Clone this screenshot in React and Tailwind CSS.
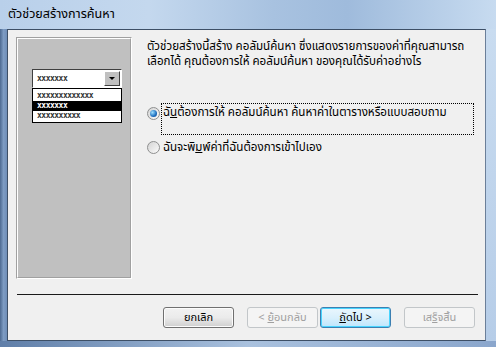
import React from "react";

const F = { fontFamily: 'Tahoma, "Noto Sans Thai", "Noto Sans", "DejaVu Sans", sans-serif' };

function Radio({ checked }) {
  return (
    <div className="w-[13px] h-[13px] rounded-full border border-[#8e8f8f] bg-gradient-to-br from-[#d4d4d4] to-[#fbfbfb] flex items-center justify-center shrink-0">
      {checked && (
        <div className="w-[7px] h-[7px] rounded-full bg-[radial-gradient(circle_at_35%_35%,#9fe0ff,#1d6fc0_60%,#0c3e8a)]" />
      )}
    </div>
  );
}

function Btn({ children, variant }) {
  const base =
    "w-[71px] h-[21px] rounded-[3px] flex items-center justify-center text-[11px] leading-none";
  if (variant === "disabled")
    return (
      <div className={base + " border border-[#c2c6c9] bg-[#f4f4f4] text-[#a0a0a0]"}><span>{children}</span></div>
    );
  if (variant === "default")
    return (
      <div className={base + " border border-[#3c7fb1] bg-gradient-to-b from-[#eaf6fd] via-[#d9f0fc] to-[#bee6fd] text-black shadow-[inset_0_0_0_1px_#48d4fe]"}>
        <span>{children}</span>
      </div>
    );
  return (
    <div className={base + " border border-[#707070] bg-gradient-to-b from-[#f2f2f2] via-[#ebebeb] to-[#cfcfcf] text-black shadow-[inset_0_0_0_1px_#fcfcfc]"}>
      <span>{children}</span>
    </div>
  );
}

export default function App() {
  return (
    <div style={F} className="w-[496px] h-[347px] relative overflow-hidden bg-[linear-gradient(90deg,#b9d0ea_0%,#c4d8ee_30%,#a8c2e0_55%,#9fbbdc_70%,#c7dbf0_100%)] flex flex-col">
      {/* title bar */}
      <div className="h-[29px] flex items-center pl-[8px] pt-[1px] text-[12.6px] text-black shrink-0">
        ตัวช่วยสร้างการค้นหา
      </div>
      <div className="flex flex-1 min-h-0">
        <div className="w-[7px] bg-gradient-to-r from-[#4d6a91] via-[#7e9cc3] to-[#6f8eb8] shrink-0" />
        {/* content */}
        <div className="w-[479px] h-[312px] border border-[#3d4f66] border-r-[#6b7f99] bg-[#f0f0f0] flex flex-col shrink-0">
          <div className="flex pt-[7px] pl-[8px]">
            {/* left picture panel */}
            <div className="w-[116px] h-[242px] border border-[#a0a0a0] border-r-white border-b-white shrink-0">
              <div className="w-full h-full border border-white border-r-[#a0a0a0] border-b-[#a0a0a0] bg-[#c0c0c0] pl-[14px] pt-[30px]">
                <div className="w-[90px]">
                  <div className="h-[19px] border border-[#404040] border-r-white border-b-white bg-white flex">
                    <div className="flex-1 flex items-center pl-[4px] text-[8px] font-bold tracking-[-0.5px] text-[#333]" style={{ fontFamily: '"DejaVu Sans Mono", monospace' }}>
                      xxxxxxx
                    </div>
                    <div className="w-[16px] h-[15px] mt-[1px] mr-[1px] bg-[#c0c0c0] border border-white border-r-[#404040] border-b-[#404040] flex items-center justify-center">
                      <div className="w-0 h-0 border-l-[3px] border-r-[3px] border-t-[3px] border-l-transparent border-r-transparent border-t-black" />
                    </div>
                  </div>
                  <div className="h-[35px] border border-black bg-white pt-[2px] text-[8px] font-bold tracking-[-0.5px] leading-[10px]" style={{ fontFamily: '"DejaVu Sans Mono", monospace' }}>
                    <div className="pl-[4px] text-[#333]">xxxxxxxxxxxxx</div>
                    <div className="pl-[4px] bg-black text-white">xxxxxxx</div>
                    <div className="pl-[4px] text-[#333]">xxxxxxxxxx</div>
                  </div>
                </div>
              </div>
            </div>
            {/* right column */}
            <div className="ml-[15px] flex flex-col">
              <div className="text-[11.6px] leading-[15px] text-black pt-[2px] w-[325px]">
                ตัวช่วยสร้างนี้สร้าง คอลัมน์ค้นหา ซึ่งแสดงรายการของค่าที่คุณสามารถ
                <br />
                เลือกได้ คุณต้องการให้ คอลัมน์ค้นหา ของคุณได้รับค่าอย่างไร
              </div>
              <div className="mt-[34px] flex items-start">
                <div className="mt-[4px]">
                  <Radio checked />
                </div>
                <div className="ml-[1px] w-[313px] h-[32px] border border-dotted border-black px-[1px] pt-[1px] text-[11.6px] leading-[15px]">
                  ฉั<span className="underline">น</span>ต้องการให้ คอลัมน์ค้นหา ค้นหาค่าในตารางหรือแบบสอบถาม
                </div>
              </div>
              <div className="mt-[5px] flex items-center">
                <Radio />
                <div className="ml-[3px] text-[11.6px] leading-[15px]">
                  ฉันจะพิ<span className="underline">ม</span>พ์ค่าที่ฉันต้องการเข้าไปเอง
                </div>
              </div>
            </div>
          </div>
          {/* separator */}
          <div className="ml-[9px] mt-[15px] w-[461px] h-[1px] bg-[#1a1a1a]" />
          {/* buttons */}
          <div className="flex mt-[12px] ml-[155px]">
            <Btn>ยกเลิก</Btn>
            <div className="ml-[13px]">
              <Btn variant="disabled">&lt; <span className="underline">ย้</span>อนกลับ</Btn>
            </div>
            <div className="ml-[2px]">
              <Btn variant="default"><span className="underline">ถั</span>ดไป &gt;</Btn>
            </div>
            <div className="ml-[13px]">
              <Btn variant="disabled">เส<span className="underline">ร็</span>จสิ้น</Btn>
            </div>
          </div>
        </div>
        <div className="flex-1 bg-gradient-to-b from-[#c9dcf0] to-[#b6cde8]" />
      </div>
      <div className="h-[6px] bg-gradient-to-r from-[#5f7ea8] via-[#a9c1de] to-[#8aa6cc] shrink-0" />
    </div>
  );
}
